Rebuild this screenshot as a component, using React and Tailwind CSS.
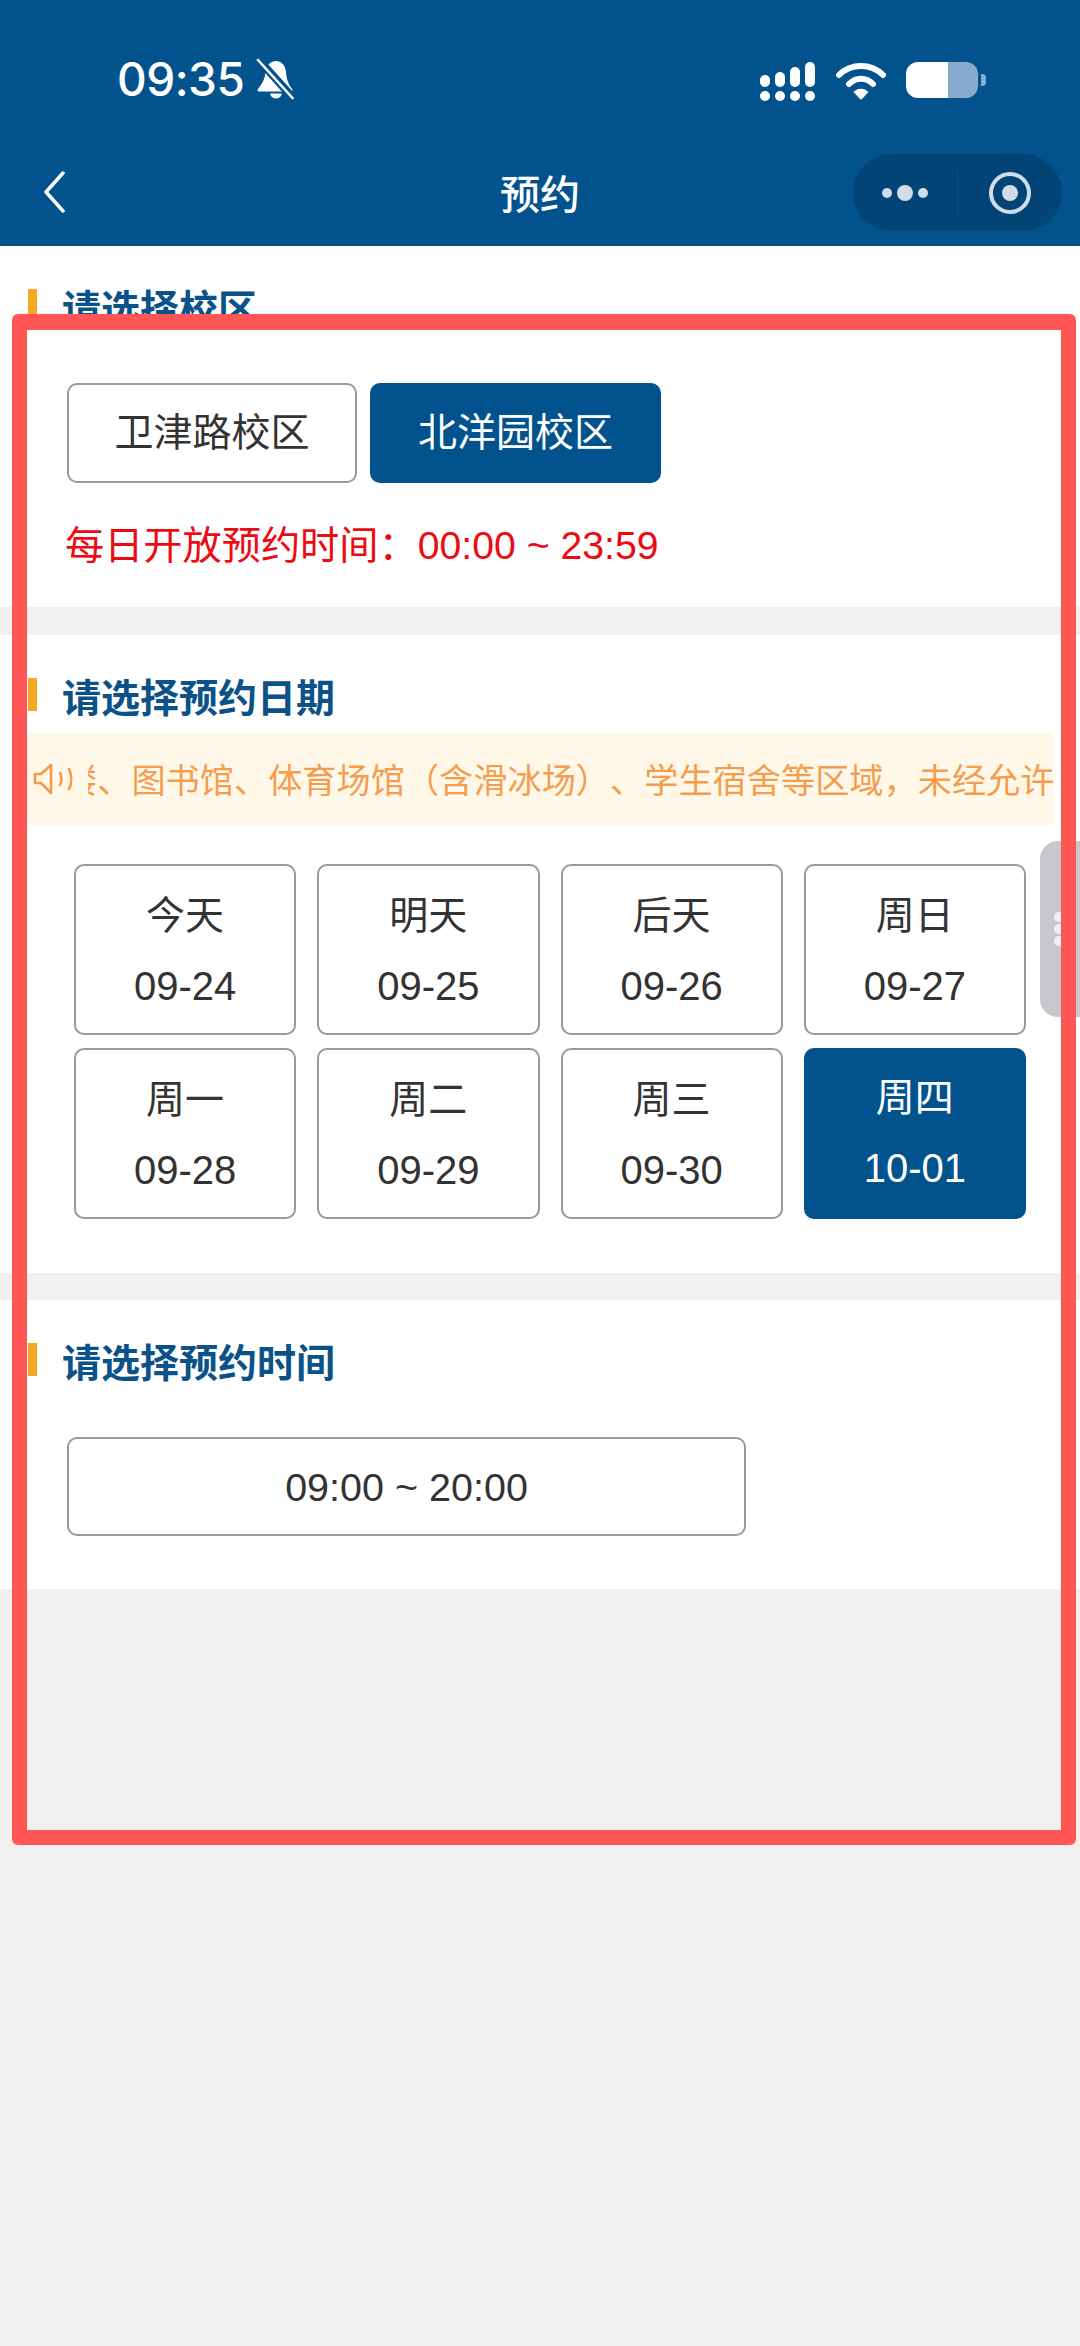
import React from 'react';

const FONT = "font-['Liberation_Sans','Noto_Sans_CJK_SC',sans-serif]";

const DATES = [
  { day: '今天', date: '09-24' },
  { day: '明天', date: '09-25' },
  { day: '后天', date: '09-26' },
  { day: '周日', date: '09-27' },
  { day: '周一', date: '09-28' },
  { day: '周二', date: '09-29' },
  { day: '周三', date: '09-30' },
  { day: '周四', date: '10-01', active: true },
];

const SectionTitle = ({ children, className }) => (
  <div className={`flex items-start gap-[25px] ${className}`}>
    <span className="w-[9px] h-[33px] bg-[#f7a823]" />
    <h2 className="text-[39px] leading-[42px] font-bold text-[#0b5288]">{children}</h2>
  </div>
);

const BellSlash = () => (
  <svg width="38" height="42" viewBox="0 0 38 42" fill="none">
    <path d="M20 3c-6 0-10 5-10.500 11C9 22 5 27 2 31c-1 1-.5 2.500 1 2.500h32c1.500 0 2-1.500 1-2.500-3-4-5.500-9-6-17C29.500 8 26 3 20 3Z" fill="#fff" />
    <path d="M14 35.500h12c-.6 3-3 5-6 5s-5.400-2-6-5Z" fill="#fff" />
    <path d="M2 1 38 41" stroke="#02528e" strokeWidth="8" />
    <path d="M2 2 36.500 40" stroke="#fff" strokeWidth="2.600" strokeLinecap="round" />
  </svg>
);

const Signal = () => (
  <svg width="56" height="40" viewBox="0 0 56 40" fill="#fff">
    <rect x="0" y="13" width="10" height="12" rx="5" />
    <rect x="15" y="10" width="10" height="15" rx="5" />
    <rect x="30" y="5" width="10" height="20" rx="5" />
    <rect x="45" y="0" width="10" height="25" rx="5" />
    <circle cx="5" cy="34" r="5" />
    <circle cx="20" cy="34" r="5" />
    <circle cx="35" cy="34" r="5" />
    <circle cx="50" cy="34" r="5" />
  </svg>
);

const Wifi = () => (
  <svg width="50" height="38" viewBox="0 0 50 38" fill="none">
    <path d="M3 13C15 1 35 1 47 13" stroke="#fff" strokeWidth="6" strokeLinecap="round" />
    <path d="M13 22c7-7 17-7 24 0" stroke="#fff" strokeWidth="6" strokeLinecap="round" />
    <path d="M17.500 30c4-4.500 11-4.500 15 0L26 37c-.6.600-1.400.600-2 0l-6.500-7Z" fill="#fff" />
  </svg>
);

const Battery = () => (
  <div className="flex items-center gap-[3px]">
    <div className="flex w-[72px] h-[36px] rounded-[12px] overflow-hidden">
      <div className="w-[42px] bg-white" />
      <div className="flex-1 bg-[#88abcd]" />
    </div>
    <div className="w-[5px] h-[12px] rounded-r-[4px] bg-[#88abcd]" />
  </div>
);

const App = () => {
  return (
    <div lang="zh-CN" className={`relative min-h-[2346px] bg-[#f0f0f0] text-[#333] ${FONT}`}>
      {/* Header */}
      <header className="h-[246px] bg-[#02528e] text-white">
        <div className="flex justify-between h-[154px] pl-[117px] pr-[94px] pt-[58px]">
          <div className="flex items-start gap-[12px]">
            <span className="font-['Inter',sans-serif] font-medium text-[46px] leading-[42px] tracking-[-0.5px]">09:35</span>
            <BellSlash />
          </div>
          <div className="flex items-start gap-[20px] pt-[4px]">
            <Signal />
            <Wifi />
            <Battery />
          </div>
        </div>
        <div className="flex items-start h-[92px] pl-[43px] pr-[18px]">
          <svg width="22" height="42" viewBox="0 0 22 42" fill="none" className="mt-[17px]">
            <path d="M20 2 3 21l17 19" stroke="#fff" strokeWidth="3.500" strokeLinecap="round" strokeLinejoin="round" />
          </svg>
          <h1 className="flex-1 pl-[162px] pt-[19px] text-center text-[40px] leading-[44px] font-medium">预约</h1>
          <div className="flex items-center w-[209px] h-[77px] rounded-full bg-[#034477]">
            <div className="flex items-center justify-center gap-[3px] w-[104px]">
              <span className="w-[10px] h-[10px] rounded-full bg-[#d0dce8]" />
              <span className="w-[16px] h-[16px] rounded-full bg-[#d0dce8] mx-[2px]" />
              <span className="w-[10px] h-[10px] rounded-full bg-[#d0dce8]" />
            </div>
            <div className="w-[1px] h-[46px] bg-[#0a4f85]" />
            <div className="flex flex-1 items-center justify-center">
              <div className="flex items-center justify-center w-[42px] h-[42px] rounded-full border-[4px] border-[#d0dce8]">
                <span className="w-[16px] h-[16px] rounded-full bg-[#d0dce8]" />
              </div>
            </div>
          </div>
        </div>
      </header>

      {/* Campus */}
      <section className="h-[361px] bg-white pt-[43px]">
        <SectionTitle className="pl-[28px] mb-[52px]">请选择校区</SectionTitle>
        <div className="flex gap-[13px] pl-[67px]">
          <button className="w-[290px] h-[100px] rounded-[10px] border-2 border-[#999] bg-white text-[39px]">卫津路校区</button>
          <button className="w-[291px] h-[100px] rounded-[10px] bg-[#02528e] text-white text-[39px]">北洋园校区</button>
        </div>
        <p className="mt-[41px] pl-[65px] text-[39.2px] leading-[44px] text-[#ee0a12] [text-spacing-trim:space-all]">每日开放预约时间：00:00 ~ 23:59</p>
      </section>

      {/* Date */}
      <section className="h-[638px] mt-[28px] bg-white pt-[43px]">
        <SectionTitle className="pl-[28px] mb-[13px]">请选择预约日期</SectionTitle>
        <div className="flex items-center h-[92px] mx-[26px] pl-[7px] bg-[#fff8e8] text-[#f59d4e]">
          <svg width="40" height="32" viewBox="0 0 40 32" fill="none" stroke="#f29a4c" strokeWidth="2.600" strokeLinecap="round" strokeLinejoin="round" className="shrink-0">
            <path d="M2 11v9h6l10 10V2L8 11H2Z" />
            <path d="M27 10c2 4 2 8 0 12" />
            <path d="M36 6c3 6 3 14 0 20" />
          </svg>
          <div className="flex-1 ml-[15px] overflow-hidden">
            <p className="ml-[-25px] mt-[3px] whitespace-nowrap text-[34.2px] leading-[44px] [text-spacing-trim:space-all]">楼、图书馆、体育场馆（含滑冰场）、学生宿舍等区域，未经允许</p>
          </div>
        </div>
        <div className="grid grid-cols-4 gap-x-[21px] gap-y-[13px] pl-[74px] pr-[54px] mt-[39px]">
          {DATES.map((item) => (
            <button
              key={item.date}
              className={`flex flex-col items-center h-[171px] rounded-[10px] pt-[28px] text-[39px] leading-[44px] ${
                item.active ? 'bg-[#02528e] text-white' : 'border-2 border-[#999] bg-white'
              }`}
            >
              <span>{item.day}</span>
              <span className="mt-[26px] text-[40px]">{item.date}</span>
            </button>
          ))}
        </div>
      </section>

      {/* Time */}
      <section className="h-[289px] mt-[27px] bg-white pt-[43px]">
        <SectionTitle className="pl-[28px] mb-[52px]">请选择预约时间</SectionTitle>
        <div className="pl-[67px]">
          <button className="w-[679px] h-[99px] pt-[2px] rounded-[10px] border-2 border-[#999] bg-white text-[39.5px]">09:00 ~ 20:00</button>
        </div>
      </section>

      {/* Floating handle */}
      <div className="absolute left-[1040px] top-[841px] flex flex-col gap-[2px] w-[40px] h-[176px] pt-[71px] pl-[14px] rounded-l-[18px] bg-[#c8c8cc]">
        <span className="w-[10px] h-[10px] rounded-full bg-[#f0f0f2]" />
        <span className="w-[10px] h-[10px] rounded-full bg-[#f0f0f2]" />
        <span className="w-[10px] h-[10px] rounded-full bg-[#f0f0f2]" />
      </div>

      {/* Annotation frame */}
      <div className="absolute left-[12px] top-[314px] w-[1064px] h-[1531px] rounded-[6px] border-x-[15px] border-t-[16px] border-b-[15px] border-[#ff5555]" />
    </div>
  );
};

export default App;
